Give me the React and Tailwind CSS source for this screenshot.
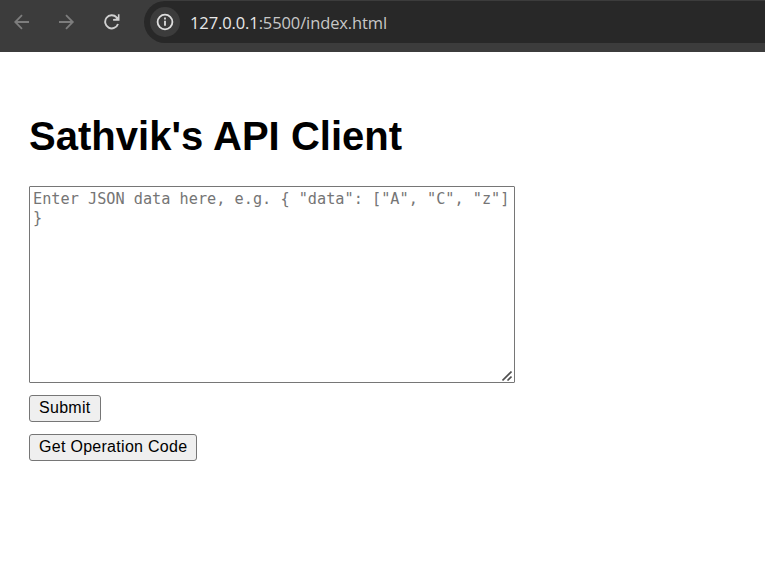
function BrowserBar() {
  return (
    <header className="flex h-[52px] items-start bg-[#3c3c3c]">
      <div className="flex h-[43px] w-[144px] shrink-0 items-center pl-[14px]">
        <svg className="mr-[29px] h-4 w-4 text-[#7d7d7d]" viewBox="0 0 16 16" fill="none" stroke="currentColor" strokeWidth="1.8">
          <path d="M15 8H1.5M8 1.2L1.2 8L8 14.8" />
        </svg>
        <svg className="mr-[29px] h-4 w-4 text-[#7d7d7d]" viewBox="0 0 16 16" fill="none" stroke="currentColor" strokeWidth="1.8">
          <path d="M0 8h13.5M7 1.2L13.8 8L7 14.8" />
        </svg>
        <svg className="h-4 w-4 text-[#d0d0d0]" viewBox="0 0 16 16" fill="none" stroke="currentColor" strokeWidth="1.9">
          <path d="M14 10A6.6 6.6 0 1 1 12.6 3.3L14 4.7" />
          <path d="M15.5 0.3V6.7H9.1V5.1L11.6 4.7L13.9 2.5V0.3Z" fill="currentColor" stroke="none" />
        </svg>
      </div>
      <div className="mt-px flex h-[42px] flex-1 items-center rounded-l-full bg-[#282828] pl-[6px]">
        <div className="flex h-[30px] w-[30px] items-center justify-center rounded-full bg-[#3c3c3c]">
          <svg className="h-[18px] w-[18px] text-[#dedede]" viewBox="0 0 18 18" fill="none" stroke="currentColor">
            <circle cx="9" cy="9" r="7.4" strokeWidth="1.8" />
            <path d="M9 7.8v5M9 4.6v1.9" strokeWidth="1.8" />
          </svg>
        </div>
        <span className="mt-[2px] ml-[10px] font-['Open_Sans',sans-serif] text-[16.5px] leading-5 tracking-[-0.11px] whitespace-pre text-[#c7c7c7]">
          <span className="text-[#e8e8e8]">127.0.0.1</span>:5500/index.html
        </span>
      </div>
    </header>
  );
}

function ActionButton({ children }) {
  return (
    <button className="flex h-[27px] w-fit items-center rounded-[3px] border border-[#767676] bg-[#efefef] px-[9px] pb-[2px] text-[16px] leading-5 tracking-[0.29px] text-black">
      {children}
    </button>
  );
}

export default function App() {
  return (
    <div className="h-[581px] w-[765px] overflow-hidden bg-white font-['Liberation_Sans',Arial,sans-serif]">
      <BrowserBar />
      <main className="flex flex-col items-start pl-[29px]">
        <h1 className="mt-[60px] text-[40px] leading-[48px] font-bold tracking-[0.03px] whitespace-nowrap text-black">Sathvik's API Client</h1>
        <div className="relative mt-[26px] h-[197px] w-[486px]">
          <textarea
            className="block h-full w-full resize-none overflow-hidden rounded-[1px] border border-[#767676] bg-white px-[3px] py-[3px] font-['DejaVu_Sans_Mono',monospace] text-[15.22px] leading-[19px] placeholder:text-[#757575]"
            placeholder={'Enter JSON data here, e.g. { "data": ["A", "C", "z"] }'}
          />
          <svg className="absolute right-[3px] bottom-[2px] h-[10px] w-[10px]" viewBox="0 0 10 10" fill="none" stroke="#505050" strokeWidth="1.6">
            <path d="M0.5 9.5L9.5 0.5M5.5 9.5L9.5 5.5" />
          </svg>
        </div>
        <div className="mt-[12px] flex flex-col gap-[12px]">
          <ActionButton>Submit</ActionButton>
          <ActionButton>Get Operation Code</ActionButton>
        </div>
      </main>
    </div>
  );
}
